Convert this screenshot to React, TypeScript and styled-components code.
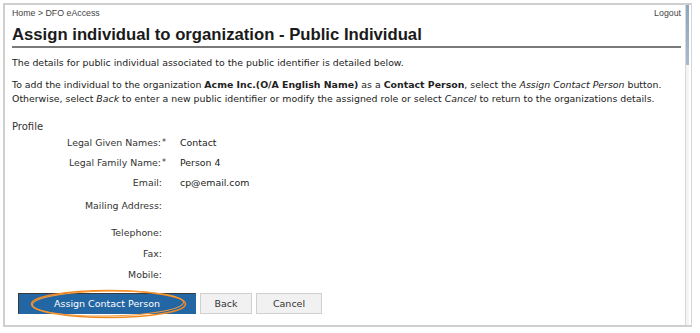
import React from "react";
import styled, { createGlobalStyle } from "styled-components";

const Global = createGlobalStyle`
  html, body { margin: 0; padding: 0; background: #fff; }
  body { font-family: "DejaVu Sans", Verdana, sans-serif; color: #333; }
`;

const Frame = styled.div`
  position: relative;
  box-sizing: border-box;
  margin: 3px 0 0 3px;
  width: 689px;
  height: 324px;
  border: 2px solid #cfcfcf;
  border-right: 1px solid #d6d6d6;
  padding: 0 10px 0 7px;
  display: flex;
  flex-direction: column;
`;

const ScrollTrack = styled.div`
  position: absolute;
  top: 0;
  right: 2px;
  width: 3px;
  bottom: 0;
  border-left: 1px solid #d8d8d8;
  background: #f4f4f4;
`;

const ScrollThumb = styled.div`
  position: absolute;
  top: 0;
  left: 0;
  right: 0;
  height: 60px;
  background: linear-gradient(#8ea6bf, #a9b9ca);
`;

const TopBar = styled.div`
  display: flex;
  justify-content: space-between;
  align-items: center;
  height: 16px;
  font-family: "Liberation Sans", Arial, sans-serif;
  font-size: 8.8px;
  color: #444;
`;

const Crumb = styled.span`
  color: #444;
`;

const Title = styled.h1`
  margin: 4px 0 0;
  padding-bottom: 1px;
  border-bottom: 2px solid #7a7a7a;
  font-family: "Liberation Sans", Arial, sans-serif;
  font-weight: bold;
  font-size: 16.7px;
  line-height: 20px;
  color: #1a1a1a;
`;

const Para = styled.p<{ $top: number }>`
  margin: ${(p) => p.$top}px 0 0;
  font-size: 9.4px;
  line-height: 14px;
  color: #222;
`;

const Section = styled.div`
  margin-top: 14px;
  font-size: 10px;
  line-height: 14px;
  color: #333;
`;

const Fields = styled.div`
  display: flex;
  flex-direction: column;
  margin-top: 3px;
`;

const Row = styled.div<{ $h: number }>`
  display: grid;
  grid-template-columns: 150px auto;
  column-gap: 18px;
  height: ${(p) => p.$h}px;
  align-items: start;
  font-size: 9.4px;
  line-height: 12px;
`;

const Label = styled.span`
  text-align: right;
  color: #333;
`;

const Star = styled.span`
  display: inline-block;
  margin-left: 1px;
  margin-right: -4px;
  font-size: 8px;
  vertical-align: top;
`;

const Value = styled.span`
  color: #222;
`;

const Buttons = styled.div`
  position: relative;
  display: flex;
  gap: 4px;
  margin: 0 0 0 6px;
`;

const Btn = styled.button<{ $primary?: boolean; $w: number }>`
  box-sizing: border-box;
  width: ${(p) => p.$w}px;
  height: 21px;
  padding: 0;
  font-family: "DejaVu Sans", Verdana, sans-serif;
  font-size: 9.5px;
  color: ${(p) => (p.$primary ? "#fff" : "#333")};
  background: ${(p) => (p.$primary ? "#2366a4" : "#f1f1f1")};
  border: 1px solid ${(p) => (p.$primary ? "#3a3a3a" : "#d0d0d0")};
  border-bottom-color: ${(p) => (p.$primary ? "#2366a4" : "#d0d0d0")};
  border-right-color: ${(p) => (p.$primary ? "#2366a4" : "#d0d0d0")};
`;

const Highlight = styled.svg`
  position: absolute;
  left: 12px;
  top: -4px;
  pointer-events: none;
`;

const rows: { label: string; req?: boolean; value?: string; h: number }[] = [
  { label: "Legal Given Names:", req: true, value: "Contact", h: 20 },
  { label: "Legal Family Name:", req: true, value: "Person 4", h: 20 },
  { label: "Email:", value: "cp@email.com", h: 23 },
  { label: "Mailing Address:", h: 27 },
  { label: "Telephone:", h: 21 },
  { label: "Fax:", h: 21 },
  { label: "Mobile:", h: 24 },
];

export default function App() {
  return (
    <>
      <Global />
      <Frame>
        <ScrollTrack>
          <ScrollThumb />
        </ScrollTrack>
        <TopBar>
          <Crumb>Home &gt; DFO eAccess</Crumb>
          <Crumb>Logout</Crumb>
        </TopBar>
        <Title>Assign individual to organization - Public Individual</Title>
        <Para $top={8}>
          The details for public individual associated to the public identifier is detailed below.
        </Para>
        <Para $top={8}>
          To add the individual to the organization <b>Acme Inc.(O/A English Name)</b> as a{" "}
          <b>Contact Person</b>, select the <i>Assign Contact Person</i> button.
          <br />
          Otherwise, select <i>Back</i> to enter a new public identifier or modify the assigned role or
          select <i>Cancel</i> to return to the organizations details.
        </Para>
        <Section>Profile</Section>
        <Fields>
          {rows.map((r) => (
            <Row key={r.label} $h={r.h}>
              <Label>
                {r.label}
                {r.req && <Star>*</Star>}
              </Label>
              <Value>{r.value ?? ""}</Value>
            </Row>
          ))}
        </Fields>
        <Buttons>
          <Btn $primary $w={178}>Assign Contact Person</Btn>
          <Btn $w={52}>Back</Btn>
          <Btn $w={66}>Cancel</Btn>
          <Highlight width="157" height="30" viewBox="0 0 157 30">
            <ellipse cx="78.5" cy="15" rx="77" ry="13.5" fill="none" stroke="#f28a22" strokeWidth="1.6" />
            <ellipse cx="78" cy="14.5" rx="75.5" ry="12.5" fill="none" stroke="#f59a3a" strokeWidth="1" transform="rotate(-1 78.5 15)" />
          </Highlight>
        </Buttons>
      </Frame>
    </>
  );
}
